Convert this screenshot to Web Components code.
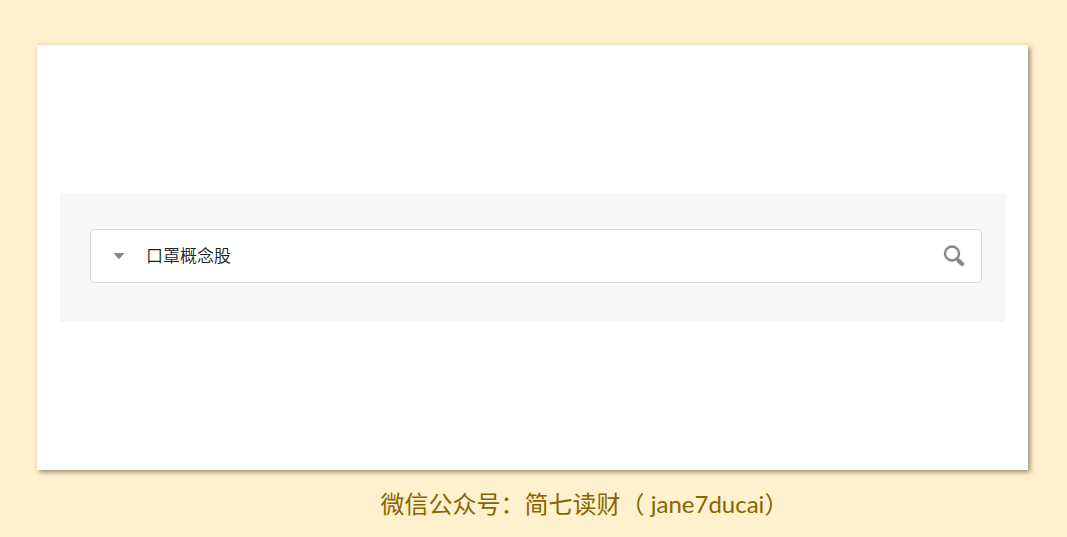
<!DOCTYPE html>
<html lang="zh-CN">
<head>
<meta charset="utf-8">
<meta name="viewport" content="width=device-width, initial-scale=1">
<title>简七读财</title>
<style>
  body { margin: 0; background: #fff0ce; font-family: Lato, "Noto Sans CJK SC", sans-serif; }
</style>
</head>
<body>
<article-frame>
  <search-panel><search-box value="口罩概念股"></search-box></search-panel>
  <span slot="caption">微信公众号：简七读财（ jane7ducai）</span>
</article-frame>
<script>
class ArticleFrame extends HTMLElement {
  constructor() {
    super();
    this.attachShadow({ mode: "open" }).innerHTML = `
      <style>
        :host { display: flex; flex-direction: column; box-sizing: border-box; min-height: 100vh; padding: 45px 39px 15px 37px; }
        main { flex: 1; display: flex; flex-direction: column; justify-content: center; padding: 23px; background: #fff; box-shadow: 2px 2px 5px rgba(60, 50, 20, .55); }
        footer { margin-top: 16px; padding-left: 104px; text-align: center; color: #876600; font-size: 24px; line-height: 36px; font-weight: 400; text-spacing-trim: space-all; }
      </style>
      <main><slot></slot></main>
      <footer><slot name="caption"></slot></footer>`;
  }
}
class SearchPanel extends HTMLElement {
  constructor() {
    super();
    this.attachShadow({ mode: "open" }).innerHTML = `
      <style>
        :host { display: block; padding: 36px 23px 39px 30px; background: #f7f7f7; }
      </style>
      <slot></slot>`;
  }
}
class SearchBox extends HTMLElement {
  constructor() {
    super();
    this.attachShadow({ mode: "open" }).innerHTML = `
      <style>
        :host { display: block; }
        form { display: flex; align-items: center; box-sizing: border-box; height: 54px; padding: 0 11px 0 16px; background: #fff; border: 1px solid #dadada; border-radius: 4px; }
        button { display: flex; align-items: center; justify-content: center; padding: 0; border: 0; background: none; color: #888; cursor: pointer; }
        .menu { width: 24px; height: 32px; }
        .go { width: 32px; height: 32px; }
        input { flex: 1; min-width: 0; margin: 0 8px 0 15px; padding: 0 0 2px; border: 0; outline: 0; background: none; color: #222; font: 350 17px/26px "Noto Sans CJK SC", sans-serif; }
        svg { display: block; }
      </style>
      <form role="search">
        <button class="menu" type="button" aria-label="选项">
          <svg width="12" height="8" viewBox="0 0 12 8"><path d="M.5 1h11L7 6.2Q6 7.3 5 6.2Z" fill="currentColor"/></svg>
        </button>
        <input type="text" aria-label="搜索">
        <button class="go" type="submit" aria-label="搜索">
          <svg width="22" height="22" viewBox="0 0 22 22" fill="none" stroke="currentColor"><circle cx="9" cy="8.5" r="7" stroke-width="2.4"/><path d="m14 14 1.5 1.5" stroke-width="2.5"/><path d="m15.7 15.7 3.4 3.4" stroke-width="4.2" stroke-linecap="round"/></svg>
        </button>
      </form>`;
    this.shadowRoot.querySelector("form").addEventListener("submit", e => e.preventDefault());
  }
  connectedCallback() {
    this.shadowRoot.querySelector("input").value = this.getAttribute("value") || "";
  }
}
customElements.define("article-frame", ArticleFrame);
customElements.define("search-panel", SearchPanel);
customElements.define("search-box", SearchBox);
</script>
</body>
</html>
